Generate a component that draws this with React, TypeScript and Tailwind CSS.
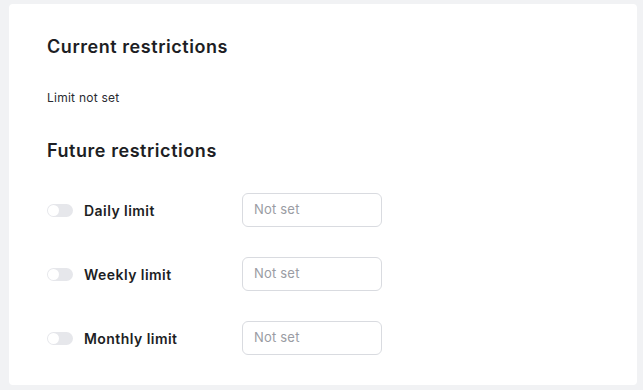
import React from "react";

function Toggle() {
  return (
    <div className="relative h-[13px] w-[26px] rounded-full bg-[#e6e7eb]">
      <div className="absolute left-[1px] top-[1px] h-[11px] w-[11px] rounded-full bg-white" />
    </div>
  );
}

function Row({ label }: { label: string }) {
  return (
    <div className="flex items-center">
      <Toggle />
      <div className="ml-[11px] w-[158px] text-[14px] font-semibold tracking-[0.45px] text-[#1d1e24]">{label}</div>
      <div className="flex h-[34px] w-[140px] items-center rounded-[6px] border border-[#d9dbe0] px-[11px] text-[13px] tracking-[0.2px] text-[#9a9ca3]">
        Not set
      </div>
    </div>
  );
}

export default function App() {
  return (
    <div
      className="h-[390px] w-[643px] bg-[#f1f2f4] pt-[4px] pl-[9px]"
      style={{ fontFamily: "Inter, 'Noto Sans', sans-serif" }}
    >
      <div className="flex h-[381px] w-[628px] flex-col rounded-[4px] bg-white pl-[38px] pt-[29px]">
        <h2 className="text-[18px] font-semibold leading-[28px] tracking-[0.55px] text-[#1d1e24]">Current restrictions</h2>
        <p className="mt-[27px] text-[12px] leading-[20px] tracking-[0.25px] text-[#2a2b31]">Limit not set</p>
        <h2 className="mt-[29px] text-[18px] font-semibold leading-[28px] tracking-[0.55px] text-[#1d1e24]">Future restrictions</h2>
        <div className="mt-[28px] flex flex-col gap-[30px]">
          <Row label="Daily limit" />
          <Row label="Weekly limit" />
          <Row label="Monthly limit" />
        </div>
      </div>
    </div>
  );
}
